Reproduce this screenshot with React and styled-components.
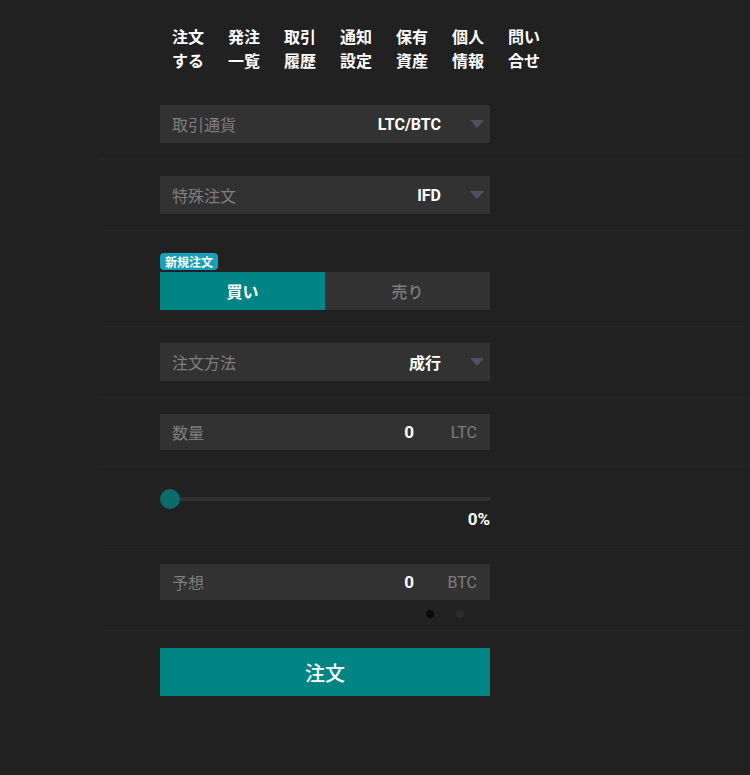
import React from "react";
import styled, { createGlobalStyle } from "styled-components";

const GlobalStyle = createGlobalStyle`
  body {
    margin: 0;
    background: #212121;
    font-family: Roboto, "Noto Sans CJK JP", sans-serif;
  }
`;

const Page = styled.div`
  min-height: 775px;
  background: #212121;
`;

const Nav = styled.div`
  display: flex;
  gap: 24px;
  padding: 24px 0 17px 172px;
`;

const NavItem = styled.div`
  width: 32px;
  color: #fff;
  font-family: "Noto Sans CJK JP", sans-serif;
  font-size: 16px;
  font-weight: 700;
  line-height: 24px;
`;

const Section = styled.div`
  margin-left: 100px;
  padding: ${(p) => p.$pad || "16px 0 16px 60px"};
  border-bottom: ${(p) => (p.$last ? "none" : "1px solid #252525")};
`;

const Column = styled.div`
  width: 330px;
`;

const Row = styled.div`
  height: ${(p) => p.$h || 38}px;
  background: #323232;
  display: flex;
  align-items: center;
  padding: 0 6px 0 12px;
`;

const Label = styled.div`
  flex: 1;
  color: #7e7e7e;
  font-family: "Noto Sans CJK JP", sans-serif;
  font-size: 16px;
`;

const Value = styled.div`
  color: #fff;
  font-family: Roboto, "Noto Sans CJK JP", sans-serif;
  font-size: 16px;
  font-weight: 700;
  margin-right: 29px;
`;

const Arrow = styled.div`
  width: 0;
  height: 0;
  border-left: 7px solid transparent;
  border-right: 7px solid transparent;
  border-top: 8px solid #4b5263;
`;

const Num = styled.div`
  color: #fff;
  font-family: Roboto, sans-serif;
  font-size: 17px;
  font-weight: 700;
  margin-right: 13px;
`;

const Unit = styled.div`
  width: 50px;
  text-align: right;
  color: #7e7e7e;
  font-family: Roboto, sans-serif;
  font-size: 16px;
  margin-right: 7px;
`;

const Badge = styled.div`
  display: inline-block;
  height: 17px;
  line-height: 17px;
  padding: 0 5px;
  border-radius: 4px;
  background: #17a0bb;
  color: #fff;
  font-family: "Noto Sans CJK JP", sans-serif;
  font-size: 12px;
  font-weight: 700;
  margin-bottom: 2px;
`;

const Toggle = styled.div`
  display: flex;
  height: 38px;
`;

const ToggleBtn = styled.div`
  flex: 1;
  display: flex;
  align-items: center;
  justify-content: center;
  background: ${(p) => (p.$active ? "#008584" : "#323232")};
  color: ${(p) => (p.$active ? "#fff" : "#7e7e7e")};
  font-family: "Noto Sans CJK JP", sans-serif;
  font-size: 16px;
  font-weight: ${(p) => (p.$active ? 700 : 500)};
`;

const Slider = styled.div`
  position: relative;
  height: 20px;
  display: flex;
  align-items: center;
`;

const Track = styled.div`
  flex: 1;
  height: 4px;
  background: #303030;
`;

const Thumb = styled.div`
  position: absolute;
  left: 0;
  top: 0;
  width: 20px;
  height: 20px;
  border-radius: 50%;
  background: #0b6b6a;
`;

const Percent = styled.div`
  text-align: right;
  color: #fff;
  font-family: Roboto, sans-serif;
  font-size: 17px;
  font-weight: 700;
  line-height: 20px;
`;

const Dots = styled.div`
  display: flex;
  justify-content: flex-end;
  gap: 22px;
  padding-right: 26px;
  margin-top: 10px;
`;

const Dot = styled.div`
  width: 8px;
  height: 8px;
  border-radius: 50%;
  background: ${(p) => (p.$on ? "#0a0a0a" : "#2b2b2b")};
`;

const Submit = styled.button`
  width: 330px;
  height: 48px;
  border: none;
  background: #008584;
  color: #fff;
  font-family: "Noto Sans CJK JP", sans-serif;
  font-size: 20px;
  font-weight: 500;
  cursor: pointer;
`;

const navItems = [
  ["注文", "する"],
  ["発注", "一覧"],
  ["取引", "履歴"],
  ["通知", "設定"],
  ["保有", "資産"],
  ["個人", "情報"],
  ["問い", "合せ"],
];

function App() {
  return (
    <Page>
      <GlobalStyle />
      <Nav>
        {navItems.map(([a, b]) => (
          <NavItem key={a}>
            {a}
            <br />
            {b}
          </NavItem>
        ))}
      </Nav>

      <Section>
        <Column>
          <Row>
            <Label>取引通貨</Label>
            <Value>LTC/BTC</Value>
            <Arrow />
          </Row>
        </Column>
      </Section>

      <Section>
        <Column>
          <Row>
            <Label>特殊注文</Label>
            <Value>IFD</Value>
            <Arrow />
          </Row>
        </Column>
      </Section>

      <Section $pad="21px 0 16px 60px">
        <Column>
          <Badge>新規注文</Badge>
          <Toggle>
            <ToggleBtn $active>買い</ToggleBtn>
            <ToggleBtn>売り</ToggleBtn>
          </Toggle>
        </Column>
      </Section>

      <Section>
        <Column>
          <Row>
            <Label>注文方法</Label>
            <Value>成行</Value>
            <Arrow />
          </Row>
        </Column>
      </Section>

      <Section>
        <Column>
          <Row $h={36}>
            <Label>数量</Label>
            <Num>0</Num>
            <Unit>LTC</Unit>
          </Row>
        </Column>
      </Section>

      <Section $pad="22px 0 18px 60px">
        <Column>
          <Slider>
            <Track />
            <Thumb />
          </Slider>
          <Percent>0%</Percent>
        </Column>
      </Section>

      <Section $pad="16px 0 12px 60px">
        <Column>
          <Row $h={36}>
            <Label>予想</Label>
            <Num>0</Num>
            <Unit>BTC</Unit>
          </Row>
          <Dots>
            <Dot $on />
            <Dot />
          </Dots>
        </Column>
      </Section>

      <Section $pad="17px 0 16px 60px" $last>
        <Submit>注文</Submit>
      </Section>
    </Page>
  );
}

export default App;
